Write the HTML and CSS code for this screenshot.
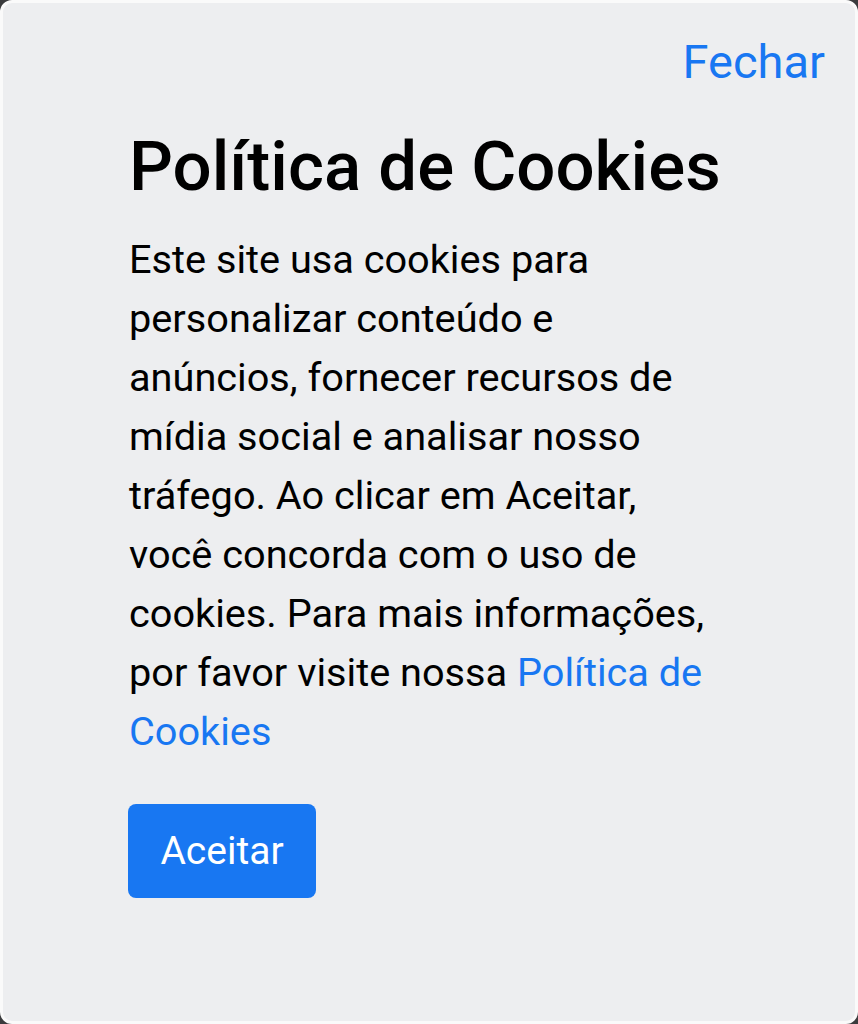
FILE: index.html
```html
<!DOCTYPE html>
<html lang="pt">
<head>
<meta charset="utf-8">
<title>Política de Cookies</title>
<link rel="stylesheet" href="styles.css">
</head>
<body>
<div class="card">
  <div class="close-row"><a class="close" href="#">Fechar</a></div>
  <div class="content">
    <h1 class="title">Política de Cookies</h1>
    <p class="text">Este site usa cookies para personalizar conteúdo e anúncios, fornecer recursos de mídia social e analisar nosso tráfego. Ao clicar em Aceitar, você concorda com o uso de cookies. Para mais informações, por favor visite nossa <a class="link" href="#">Política de Cookies</a></p>
    <button class="accept" type="button">Aceitar</button>
  </div>
</div>
</body>
</html>
```

FILE: styles.css
```css
html, body {
  margin: 0;
  padding: 0;
  background: #3a3b3d;
}
body {
  font-family: Roboto, "Liberation Sans", sans-serif;
  color: #000;
}
.card {
  box-sizing: border-box;
  width: 858px;
  height: 1024px;
  border: 3px solid #fafafa;
  border-radius: 12px;
  background: #edeef0;
  padding: 34px 30px 0 126px;
  display: flex;
  flex-direction: column;
}
.close-row {
  display: flex;
  justify-content: flex-end;
}
.close {
  font-size: 47px;
  line-height: 50px;
  color: #1877f2;
  text-decoration: none;
}
.content {
  width: 592px;
  padding-top: 38px;
}
.title {
  margin: 0;
  font-size: 69px;
  line-height: 84px;
  font-weight: 500;
  white-space: nowrap;
}
.text {
  margin: 21px 0 0;
  font-size: 39.7px;
  line-height: 59px;
}
.link {
  color: #1877f2;
  text-decoration: none;
}
.accept {
  margin-top: 43px;
  margin-left: -1px;
  width: 188px;
  height: 94px;
  border: 0;
  border-radius: 8px;
  background: #1877f2;
  color: #fff;
  font-family: Roboto, "Liberation Sans", sans-serif;
  font-size: 39px;
  padding: 0;
}
```
